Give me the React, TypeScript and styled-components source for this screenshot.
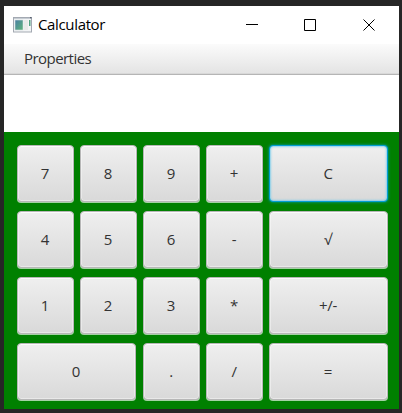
import React from "react";
import styled, { createGlobalStyle, css } from "styled-components";

const GlobalStyle = createGlobalStyle`
  * { box-sizing: border-box; }
  body { margin: 0; background: #262626; }
`;

const Desktop = styled.div`
  width: 402px;
  height: 413px;
  padding: 6px 3px 4px 4px;
  background: #262626;
  font-family: "Open Sans", "Noto Sans", sans-serif;
  overflow: hidden;
`;

const Window = styled.div`
  display: flex;
  flex-direction: column;
  height: 403px;
  background: #fff;
`;

const TitleBar = styled.header`
  display: flex;
  flex-shrink: 0;
  align-items: center;
  height: 38px;
  padding-left: 9px;
`;

const Title = styled.span`
  flex: 1;
  margin-left: 5px;
  padding-bottom: 2px;
  font-size: 15px;
  line-height: 20px;
  letter-spacing: -0.35px;
  color: #000;
`;

const WindowControls = styled.div`
  display: flex;
  gap: 46px;
  padding-right: 23px;
`;

const ControlIcon = styled.svg`
  display: block;
  width: 13px;
  height: 12px;
  fill: none;
  stroke: #000;
`;

const MenuBar = styled.nav`
  display: flex;
  flex-shrink: 0;
  align-items: center;
  height: 31px;
  padding: 0 20px 2px;
  border-bottom: 1px solid #b5b5b5;
  box-shadow: inset 0 -1px #d8d8d8;
  background: linear-gradient(#fbfbfb, #e3e3e3);
`;

const MenuItem = styled.span`
  font-size: 15px;
  line-height: 20px;
  letter-spacing: -0.55px;
  color: #333;
`;

const Display = styled.div`
  flex-shrink: 0;
  height: 57px;
  background: #fff;
`;

const Keypad = styled.main`
  flex: 1;
  display: grid;
  grid-template-columns: repeat(4, 57px) 119px;
  grid-auto-rows: 57px;
  gap: 9px 6px;
  padding: 13px 11px 9px 13px;
  background: #008000;
`;

const Key = styled.button<{ $wide?: boolean; $focused?: boolean }>`
  display: flex;
  align-items: center;
  justify-content: center;
  width: ${(p) => (p.$wide ? "119px" : "100%")};
  grid-column: span ${(p) => (p.$wide ? 2 : 1)};
  height: 57px;
  margin: 0;
  padding: 0 1px 2px 0;
  border: 1px solid #b7b7b7;
  border-radius: 4px;
  background: linear-gradient(#efefef, #d9d9d9) padding-box, #b7b7b7;
  box-shadow: inset 0 0 0 1px rgba(255, 255, 255, 0.4), inset 0 1px #f8f8f8,
    0 1px #a4d2a4;
  font-family: inherit;
  font-size: 15px;
  line-height: 20px;
  letter-spacing: -0.3px;
  color: #333;
  outline: none;
  ${(p) =>
    p.$focused &&
    css`
      border-color: #039ed3;
      background: linear-gradient(#efefef, #d9d9d9) padding-box, #039ed3;
      box-shadow: inset 0 0 2px 1px rgba(120, 205, 235, 0.85), 0 0 3px rgba(3, 158, 211, 0.9);
    `}
`;

type KeyDef = { label: string; wide?: boolean; focused?: boolean };

const keys: KeyDef[] = [
  { label: "7" }, { label: "8" }, { label: "9" }, { label: "+" }, { label: "C", focused: true },
  { label: "4" }, { label: "5" }, { label: "6" }, { label: "-" }, { label: "√" },
  { label: "1" }, { label: "2" }, { label: "3" }, { label: "*" }, { label: "+/-" },
  { label: "0", wide: true }, { label: "." }, { label: "/" }, { label: "=" },
];

const AppIcon = () => (
  <svg width="20" height="17" viewBox="0 0 20 17">
    <defs>
      <linearGradient id="pane" x1="0" y1="0" x2="1" y2="1">
        <stop offset="0" stopColor="#4a7fa4" />
        <stop offset="1" stopColor="#5cb579" />
      </linearGradient>
    </defs>
    <rect x="0.5" y="0.5" width="18" height="14.5" fill="#f3f5f6" stroke="#a3a9b2" />
    <path d="M1 1.5H17" stroke="#c6ccd3" />
    <rect x="2" y="3" width="8" height="10" fill="url(#pane)" stroke="#d5dcdf" strokeWidth="0.6" />
    <rect x="11" y="3" width="4" height="10" fill="#e7eae8" />
    <rect x="16" y="3" width="1.5" height="6" fill="#55a383" />
    <rect x="17" y="0" width="1.5" height="1.5" fill="#596170" />
  </svg>
);

export default function App() {
  return (
    <>
      <GlobalStyle />
      <Desktop>
        <Window>
          <TitleBar>
            <AppIcon />
            <Title>Calculator</Title>
            <WindowControls>
              <ControlIcon viewBox="0 0 13 12" aria-label="Minimize">
                <path d="M1 5.5H13" />
              </ControlIcon>
              <ControlIcon viewBox="0 0 13 12" aria-label="Maximize">
                <path d="M0.5 0.5H11.5V11.5H0.5Z" />
              </ControlIcon>
              <ControlIcon viewBox="0 0 13 12" aria-label="Close">
                <path d="M0.5 0.5L11.5 11.5M11.5 0.5L0.5 11.5" />
              </ControlIcon>
            </WindowControls>
          </TitleBar>
          <MenuBar>
            <MenuItem>Properties</MenuItem>
          </MenuBar>
          <Display />
          <Keypad>
            {keys.map((k) => (
              <Key key={k.label} $wide={k.wide} $focused={k.focused}>
                {k.label}
              </Key>
            ))}
          </Keypad>
        </Window>
      </Desktop>
    </>
  );
}
